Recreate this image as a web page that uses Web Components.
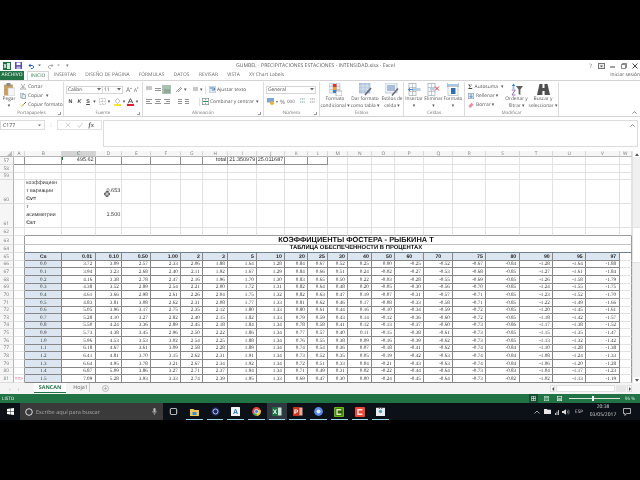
<!DOCTYPE html>
<html lang="es">
<head>
<meta charset="utf-8">
<title>GUMBEL - PRECIPITACIONES ESTACIONES - INTENSIDAD.xlsx - Excel</title>
<style>
  html, body { margin: 0; padding: 0; background: #000; width: 640px; height: 480px; overflow: hidden; }
</style>
</head>
<body>
<xl-app></xl-app>
<script>
const UI_FONT = '"Open Sans", "Liberation Sans", sans-serif';

const tri = '<svg width="4" height="3" viewBox="0 0 4 3"><path d="M0 0h4L2 2.4z" fill="#666"/></svg>';

class XlTitlebar extends HTMLElement {
  constructor() {
    super();
    this.attachShadow({ mode: "open" }).innerHTML = `
    <style>
      :host { display: flex; align-items: center; height: 11px; background: #fff; position: relative; font: 5.1px ${UI_FONT}; color: #555; text-rendering: geometricPrecision; }
      .qa { display: flex; align-items: center; gap: 3px; padding-left: 3px; width: 236px; box-sizing: border-box; }
      .title { width: 156px; text-align: center; white-space: nowrap; }
      .ctl { margin-left: auto; display: flex; align-items: center; }
      .ctl span { width: 11px; text-align: center; font-size: 6px; color: #555; display: flex; justify-content: center; }
    </style>
    <div class="qa">
      <svg width="8" height="8" viewBox="0 0 8 8"><rect width="8" height="8" fill="#1d6f42"/><rect x="4" y="1" width="3" height="6" fill="#cfe8d8"/><path d="M1 2l2 4M3 2L1 6" stroke="#fff" stroke-width=".9"/></svg>
      <svg width="7" height="7" viewBox="0 0 7 7" style="margin-left:1px"><rect width="7" height="7" fill="#5b4fa8"/><rect x="1.5" y=".5" width="4" height="2.6" fill="#fff"/><rect x="1.5" y="4.5" width="4" height="2.5" fill="#bdb6df"/></svg>
      <svg width="7" height="6" viewBox="0 0 7 6" style="margin-left:3px"><path d="M1 2.5h3.5a1.6 1.6 0 0 1 0 3H3" fill="none" stroke="#2a5ca8" stroke-width="1"/><path d="M2.5 .5L.5 2.5l2 2z" fill="#2a5ca8"/></svg>
      ${tri.replace('width="4"','width="3"')}
      <svg width="7" height="6" viewBox="0 0 7 6" style="margin-left:3px"><path d="M6 2.5H2.5a1.6 1.6 0 0 0 0 3H4" fill="none" stroke="#aaa" stroke-width="1"/><path d="M4.5 .5l2 2-2 2z" fill="#aaa"/></svg>
      ${tri.replace('width="4"','width="3"').replace('#666','#aaa')}
      <span style="color:#888;margin-left:3px">▾</span>
    </div>
    <div class="title">GUMBEL - PRECIPITACIONES ESTACIONES - INTENSIDAD.xlsx - Excel</div>
    <div class="ctl">
      <span>?</span>
      <span><svg width="7" height="6" viewBox="0 0 7 6"><rect x=".5" y=".5" width="6" height="5" fill="#eee" stroke="#777"/><path d="M2 2.5h3L3.5 4.5z" fill="#555"/></svg></span>
      <span><svg width="5" height="5" viewBox="0 0 5 5"><path d="M0 4h5" stroke="#444"/></svg></span>
      <span><svg width="6" height="6" viewBox="0 0 6 6"><path d="M.5 1.5h4v4h-4zM1.5 1.5v-1h4v4h-1" fill="none" stroke="#555" stroke-width=".7"/></svg></span>
      <span><svg width="6" height="6" viewBox="0 0 6 6"><path d="M.5.5l5 5M5.5.5l-5 5" stroke="#333" stroke-width=".9"/></svg></span>
    </div>`;
  }
}

class XlTabs extends HTMLElement {
  constructor() {
    super();
    const tabs = [["INSERTAR", 32], ["DISEÑO DE PÁGINA", 53], ["FÓRMULAS", 35], ["DATOS", 25], ["REVISAR", 29], ["VISTA", 21], ["XY Chart Labels", 45]];
    this.attachShadow({ mode: "open" }).innerHTML = `
    <style>
      :host { display: flex; height: 9px; background: #fff; font: 4.9px ${UI_FONT}; color: #666; text-rendering: geometricPrecision; line-height: 9px; }
      div { text-align: center; white-space: nowrap; box-sizing: border-box; flex: none; }
      .file { width: 24px; background: #217346; color: #fff; margin-right: 3px; }
      .on { width: 22px; color: #217346; border: 1px solid #d4d4d4; border-bottom: 0; line-height: 8px; background: #fff; }
      .login { margin-left: auto; padding-right: 0; font-size: 4.9px; color: #555; }
    </style>
    <div class="file">ARCHIVO</div><div class="on">INICIO</div>
    ${tabs.map(([t, w]) => `<div style="width:${w}px">${t}</div>`).join("")}
    <div class="login">Iniciar sesión</div>`;
  }
}

class XlGroup extends HTMLElement {
  constructor() {
    super();
    this.attachShadow({ mode: "open" }).innerHTML = `
    <style>
      :host { display: flex; flex-direction: column; flex: none; box-sizing: border-box; border-right: 1px solid #dcdcdc; height: 34px; margin-top: 1px; position: relative; }
      .body { flex: 1; display: flex; min-height: 0; }
      .label { height: 5px; line-height: 5px; text-align: center; color: #777; font-size: 4.6px; margin-bottom: .5px; }
      .launch { position: absolute; right: 2px; bottom: 1px; width: 2px; height: 2px; border-right: 1px solid #999; border-bottom: 1px solid #999; }
    </style>
    <div class="body"><slot></slot></div>
    <div class="label"></div>
    <div class="launch" part="launch"></div>`;
    this.shadowRoot.querySelector(".label").textContent = this.getAttribute("label");
    if (this.hasAttribute("nolaunch")) this.shadowRoot.querySelector(".launch").remove();
  }
}

class XlBigBtn extends HTMLElement {
  constructor() {
    super();
    this.attachShadow({ mode: "open" }).innerHTML = `
    <style>
      :host { display: flex; flex-direction: column; align-items: center; flex: none; padding-top: 1px; box-sizing: border-box; }
      .ico { height: 13px; display: flex; align-items: center; }
      .txt { margin-top: 0; line-height: 6.6px; text-align: center; white-space: pre; font-size: 4.8px; color: #555; }
    </style>
    <div class="ico"><slot></slot></div>
    <div class="txt"></div>`;
    this.shadowRoot.querySelector(".txt").textContent = this.getAttribute("label");
  }
}

class XlSelect extends HTMLElement {
  constructor() {
    super();
    this.attachShadow({ mode: "open" }).innerHTML = `
    <style>
      :host { display: flex; align-items: center; box-sizing: border-box; height: 8px; border: 1px solid #d6d6d6; background: #fff; padding: 0 1px 0 1px; font: 4.9px ${UI_FONT}; color: #444; flex: none; }
      svg { margin-left: auto; }
    </style>
    <slot></slot>${tri}`;
  }
}

class XlRibbon extends HTMLElement {
  constructor() {
    super();
    const bars = (ys, x1s, x2s) => `<svg width="8" height="7" viewBox="0 0 8 7">${ys.map((y, i) => `<path d="M${x1s[i]} ${y}H${x2s[i]}" stroke="#777" stroke-width=".8"/>`).join("")}</svg>`;
    this.attachShadow({ mode: "open" }).innerHTML = `
    <style>
      :host { display: flex; height: 37px; background: #fff; border-top: 1px solid #d4d4d4; border-bottom: 1px solid #d4d4d4; box-sizing: border-box; font: 4.9px ${UI_FONT}; color: #555; text-rendering: geometricPrecision; position: relative; }
      .col { display: flex; flex-direction: column; }
      .row { display: flex; align-items: center; height: 9.4px; white-space: nowrap; }
      .row svg { flex: none; }
      .tall { height: 16px; }
      b { font: bold 5.4px "Liberation Sans", sans-serif; color: #444; display: block; text-align: center; }
      .btn { display: flex; align-items: center; justify-content: center; flex: none; }
      .caret { position: absolute; right: 3px; bottom: 2px; }
    </style>

    <xl-group label="Portapapeles" style="width:64px">
      <xl-big-btn label="Pegar&#10;▾" style="width:18px">
        <svg width="11" height="13" viewBox="0 0 11 13"><rect y="1.5" width="9" height="11" rx=".6" fill="#c8a063"/><rect x="2.5" width="4" height="3" fill="#8a8a8a"/><rect x="4" y="5" width="7" height="8" fill="#f5f5f5" stroke="#b8b8b8" stroke-width=".5"/></svg>
      </xl-big-btn>
      <div class="col">
        <div class="row"><svg width="6" height="6" viewBox="0 0 6 6" style="margin:0 2px 0 2px"><path d="M1 0l3 4M5 0L2 4" stroke="#888" stroke-width=".7"/><circle cx="1.4" cy="4.8" r="1" fill="none" stroke="#888" stroke-width=".6"/><circle cx="4.6" cy="4.8" r="1" fill="none" stroke="#888" stroke-width=".6"/></svg>Cortar</div>
        <div class="row"><svg width="6" height="6" viewBox="0 0 6 6" style="margin:0 2px 0 2px"><rect x=".3" y=".3" width="3.6" height="4" fill="#fff" stroke="#8aa" stroke-width=".6"/><rect x="2" y="1.7" width="3.6" height="4" fill="#e8f0ee" stroke="#789" stroke-width=".6"/></svg>Copiar<span style="margin-left:3px">▾</span></div>
        <div class="row"><svg width="6" height="6" viewBox="0 0 6 6" style="margin:0 2px 0 2px"><path d="M3.4 2.5L6 0" stroke="#7a6030"/><path d="M.4 5.6L3 2l1 1z" fill="#e0b23a"/></svg>Copiar formato</div>
      </div>
    </xl-group>

    <xl-group label="Fuente" style="width:79px">
      <div class="col" style="padding:3px 0 0 2px">
        <div class="row" style="height:9px">
          <xl-select style="width:37px">Calibri</xl-select><xl-select style="width:21px;margin-left:-1px">11</xl-select>
          <span style="margin-left:3px;font-size:6.5px;color:#666">A<sup style="font-size:3px">▴</sup></span>
          <span style="margin-left:2px;font-size:5.4px;color:#666">A<sup style="font-size:3px">▾</sup></span>
        </div>
        <div class="row" style="margin-top:3px;height:9px">
          <b style="width:7px;margin-left:1px">N</b><b style="width:9px;margin-left:1px;font-style:italic">K</b><b style="width:8px;text-decoration:underline">S</b>
          <span style="width:5px;text-align:center">▾</span>
          <svg width="7" height="7" viewBox="0 0 7 7" style="margin-left:2px"><path d="M.5.5h6v6h-6zM3.5.5v6M.5 3.5h6" fill="none" stroke="#aaa" stroke-width=".6" stroke-dasharray="1 .5"/></svg>
          <span style="width:6px;text-align:center">▾</span>
          <svg width="7" height="8" viewBox="0 0 7 8" style="margin-left:2px"><path d="M3.5.5L6 3.2 3.5 5.5 1 3.2z" fill="#fff" stroke="#888" stroke-width=".6"/><rect y="6" width="7" height="2" fill="#f5e626"/></svg>
          <span style="width:6px;text-align:center">▾</span>
          <svg width="7" height="8" viewBox="0 0 7 8"><path d="M1 5.4L3.5.6 6 5.4M2 3.8h3" fill="none" stroke="#555" stroke-width=".9"/><rect y="6" width="7" height="2" fill="#d9222a"/></svg>
          <span style="width:6px;text-align:center">▾</span>
        </div>
      </div>
    </xl-group>

    <xl-group label="Alineación" style="width:121px">
      <div class="col" style="padding:3px 0 0 1px">
        <div class="row" style="height:9px">
          <span class="btn" style="width:9px">${bars([1,3], [1,1], [7,7])}</span>
          <span class="btn" style="width:9px">${bars([2.5,4.5], [1,1], [7,7])}</span>
          <span class="btn" style="width:9px;height:9px;background:#a8c3b0">${bars([4,6], [1,1], [7,7])}</span>
          <span class="btn" style="width:10px;margin-left:3px"><svg width="8" height="7" viewBox="0 0 8 7"><path d="M1 6l5-5M3 6l4-4" stroke="#777" stroke-width=".8"/></svg></span>
          <span style="width:4px">▾</span>
          <span class="btn" style="width:10px;margin-left:2px">${bars([2,4], [2,2], [7,7])}</span>
          <span style="width:4px">▾</span>
          <span style="width:1px;height:8px;background:#e0e0e0;margin:0 3px 0 1px"></span>
          <svg width="7" height="7" viewBox="0 0 7 7"><rect width="7" height="7" fill="#dfe7f2" stroke="#8aa" stroke-width=".5"/><path d="M1 2h4.5v2H3" fill="none" stroke="#2b6cb8" stroke-width=".8"/></svg>
          <span style="margin-left:1px">Ajustar texto</span>
        </div>
        <div class="row" style="margin-top:3px;height:9px">
          <span class="btn" style="width:9px">${bars([1.5,3.5,5.5], [1,1,1], [7,5,7])}</span>
          <span class="btn" style="width:9px">${bars([1.5,3.5,5.5], [1,2,1], [7,6,7])}</span>
          <span class="btn" style="width:9px">${bars([1.5,3.5,5.5], [1,3,1], [7,7,7])}</span>
          <span class="btn" style="width:9px;margin-left:3px">${bars([1.5,3.5,5.5], [3,3,3], [7,7,7])}</span>
          <span class="btn" style="width:9px">${bars([1.5,3.5,5.5], [1,1,1], [5,5,5])}</span>
          <span style="width:1px;height:8px;background:#e0e0e0;margin:0 2px 0 7px"></span>
          <svg width="7" height="7" viewBox="0 0 7 7"><rect x=".3" y=".3" width="6.4" height="6.4" fill="#fff" stroke="#6c8a78" stroke-width=".7"/><path d="M1 3.5h5" stroke="#2e7d4f" stroke-width=".9"/><path d="M3.5 .3v2M3.5 4.7v2" stroke="#9ab"/></svg>
          <span style="margin-left:1px">Combinar y centrar</span><span style="margin-left:2px">▾</span>
        </div>
      </div>
    </xl-group>

    <xl-group label="Número" style="width:56px">
      <div class="col" style="padding:3px 0 0 2px">
        <div class="row" style="height:9px"><xl-select style="width:50px">General</xl-select></div>
        <div class="row" style="margin-top:3px;height:9px;color:#666">
          <svg width="8" height="7" viewBox="0 0 8 7" style="margin-left:1px"><rect width="7" height="4.5" fill="#7ea6cf"/><circle cx="5" cy="5" r="2" fill="#e2b23a"/></svg>
          <span style="margin-left:1px;font-size:4px">▾</span>
          <span style="margin-left:2px;font-size:6px">%</span>
          <span style="margin-left:2px;font-size:4.6px">000</span>
          <span style="margin-left:4px"><svg width="7" height="7" viewBox="0 0 7 7"><path d="M1 2h5M1 5h5" stroke="#7aa" stroke-width="1.2" stroke-dasharray="1.2 .6"/></svg></span>
          <span style="margin-left:3px"><svg width="7" height="7" viewBox="0 0 7 7"><path d="M1 2h5M1 5h5" stroke="#999" stroke-width="1.2" stroke-dasharray="1.2 .6"/></svg></span>
        </div>
      </div>
    </xl-group>

    <xl-group label="Estilos" nolaunch style="width:84px">
      <xl-big-btn label="Formato&#10;condicional ▾" style="width:30px">
        <svg width="13" height="13" viewBox="0 0 13 13"><rect width="11" height="10" fill="#eef1f5" stroke="#9aa7b8" stroke-width=".5"/><path d="M4 0v10M7.5 0v10M0 3.3h11M0 6.6h11" stroke="#9aa7b8" stroke-width=".5"/><rect x="4" y="1" width="3.5" height="3" fill="#d43a2f"/><rect x="4" y="4" width="3.5" height="3" fill="#e8a33a"/><rect x="4" y="7" width="3.5" height="3" fill="#3f7fc4"/><rect x="7" y="8" width="6" height="5" fill="#fff" stroke="#777" stroke-width=".5"/></svg>
      </xl-big-btn>
      <xl-big-btn label="Dar formato&#10;como tabla ▾" style="width:30px">
        <svg width="13" height="13" viewBox="0 0 13 13"><rect width="11" height="10" fill="#b7c9de" stroke="#8ea4bd" stroke-width=".5"/><path d="M0 3h11M0 6h11M4 0v10M8 0v10" stroke="#e8eef5" stroke-width=".6"/><path d="M6 12l6-7" stroke="#667" stroke-width="1.6"/></svg>
      </xl-big-btn>
      <xl-big-btn label="Estilos de&#10;celda ▾" style="width:24px">
        <svg width="14" height="13" viewBox="0 0 14 13"><rect width="12" height="10" fill="#eef1f5" stroke="#8ea4bd" stroke-width=".5"/><rect x="2" y="2" width="8" height="6" fill="#a9bdd8"/><path d="M7 12.5l6-7" stroke="#667" stroke-width="1.5"/></svg>
      </xl-big-btn>
    </xl-group>

    <xl-group label="Celdas" nolaunch style="width:61px">
      <xl-big-btn label="Insertar&#10;▾" style="width:20px">
        <svg width="13" height="13" viewBox="0 0 13 13"><rect x="1" y=".5" width="7" height="12" fill="#fff" stroke="#8a98a8" stroke-width=".6"/><path d="M1 4.5h7M1 8.5h7M4.5 .5v12" stroke="#8a98a8" stroke-width=".5"/><rect x="5" y="5" width="7.5" height="3" fill="#b9cde3"/><path d="M5 6.5H.5M2 5L.5 6.5 2 8" fill="none" stroke="#2b6cb8" stroke-width=".8"/></svg>
      </xl-big-btn>
      <xl-big-btn label="Eliminar&#10;▾" style="width:19px">
        <svg width="13" height="13" viewBox="0 0 13 13"><rect x="1" y=".5" width="7" height="12" fill="#fff" stroke="#8a98a8" stroke-width=".6"/><path d="M1 4.5h7M1 8.5h7M4.5 .5v12" stroke="#8a98a8" stroke-width=".5"/><rect x="3" y="4.5" width="4" height="3" fill="#b9cde3"/><path d="M8 3.5l4 4M12 3.5l-4 4" stroke="#d8402f" stroke-width="1"/></svg>
      </xl-big-btn>
      <xl-big-btn label="Formato&#10;▾" style="width:20px">
        <svg width="12" height="13" viewBox="0 0 12 13"><path d="M1 2h10M0 0v4M12 0v4" stroke="#2b6cb8" stroke-width=".8"/><rect x="1" y="3.5" width="10" height="9" fill="#fff" stroke="#8a98a8" stroke-width=".5"/><rect x="4" y="5" width="4.5" height="6" fill="#2f6eb5"/></svg>
      </xl-big-btn>
    </xl-group>

    <xl-group label="Modificar" nolaunch style="width:94px">
      <div class="col" style="width:38px;padding:0 0 0 3px;box-sizing:border-box">
        <div class="row"><span style="width:6px;font:bold 7px 'Liberation Serif',serif;color:#444">Σ</span><span style="margin-left:2px">Autosuma</span><span style="margin-left:3px">▾</span></div>
        <div class="row"><svg width="6" height="6" viewBox="0 0 6 6"><rect x=".3" y=".3" width="5.4" height="5.4" fill="#dfe8f2" stroke="#7f95ad" stroke-width=".6"/><path d="M3 1v3.4M1.6 3l1.4 1.6L4.4 3" fill="none" stroke="#2b6cb8" stroke-width=".7"/></svg><span style="margin-left:2px">Rellenar</span><span style="margin-left:1px">▾</span></div>
        <div class="row"><svg width="6" height="6" viewBox="0 0 6 6"><path d="M.5 4L3.5.8 5.6 2.6 3 5.6H1.4z" fill="#e88fa8"/></svg><span style="margin-left:2px">Borrar</span><span style="margin-left:1px">▾</span></div>
      </div>
      <xl-big-btn label="Ordenar y&#10;filtrar ▾" style="width:27px">
        <svg width="12" height="13" viewBox="0 0 12 13"><path d="M2.500 .5L.8 3h3.400z" fill="#3f7fc4"/><rect x="1.6" y="3" width="1.8" height="3" fill="#9fc0e2"/><path d="M.8 7h3.400L1 12h3.400" fill="none" stroke="#8e5fb0" stroke-width=".9"/><path d="M5 3h7L9.400 6.500V12L7.600 11V6.500z" fill="#606060"/></svg>
      </xl-big-btn>
      <xl-big-btn label="Buscar y&#10;seleccionar ▾" style="width:26px">
        <svg width="13" height="12" viewBox="0 0 13 12"><path d="M2.500 0h3v4h2V0h3L13 11H7.600V7H5.400v4H0z" fill="#4f4f4f"/></svg>
      </xl-big-btn>
    </xl-group>
    <svg class="caret" width="5" height="3" viewBox="0 0 5 3"><path d="M.5 2.600L2.500.6l2 2" fill="none" stroke="#555" stroke-width=".7"/></svg>`;
  }
}

class XlFormula extends HTMLElement {
  constructor() {
    super();
    this.attachShadow({ mode: "open" }).innerHTML = `
    <style>
      :host { display: flex; align-items: flex-start; height: 34px; padding: 3px 2px 0 0; box-sizing: border-box; background: #fff; font: 5.2px ${UI_FONT}; color: #444; text-rendering: geometricPrecision; }
      .name { width: 45px; height: 10px; box-sizing: border-box; border: 1px solid #dcdcdc; display: flex; align-items: center; padding: 0 3px 0 2px; justify-content: space-between; }
      .dots { width: 12px; text-align: center; color: #aaa; line-height: 10px; }
      .fx { width: 45px; height: 10px; box-sizing: border-box; border: 1px solid #e2e2e2; display: flex; align-items: center; justify-content: space-around; padding: 0 4px; }
      .input { flex: 1; height: 27px; margin-top: 0; box-sizing: border-box; border: 1px solid #dcdcdc; position: relative; margin-left: 1px; }
      .input svg { position: absolute; right: 2px; top: 3px; }
      i { font: italic bold 6.6px "Liberation Serif", serif; color: #555; }
    </style>
    <div class="name"><span>C177</span>${tri.replace('width="4"','width="3"')}</div>
    <div class="dots">⁝</div>
    <div class="fx">
      <svg width="6" height="6" viewBox="0 0 6 6"><path d="M.7.7l4.6 4.6M5.300.7L.7 5.300" stroke="#bbb" stroke-width=".7"/></svg>
      <svg width="6" height="6" viewBox="0 0 6 6"><path d="M.5 3.400l1.800 2L5.600.8" fill="none" stroke="#bbb" stroke-width=".7"/></svg>
      <i>fx</i>
    </div>
    <div class="input"><svg width="5" height="3" viewBox="0 0 5 3"><path d="M.5 2.600L2.500.6l2 2" fill="none" stroke="#555" stroke-width=".7"/></svg></div>`;
  }
}

const COLS = [13.5, 11.8, 37, 33.4, 26.6, 29, 30, 22, 25, 29, 28, 23, 20, 20, 24, 23, 29, 29, 33, 33.4, 33.6, 33, 33.4, 12];
const NAMES = "ABCDEFGHIJKLMNOPQRSTUVW".split("");
const HEAD = ["0.01", "0.10", "0.50", "1.00", "2", "3", "5", "10", "20", "25", "30", "40", "50", "60", "70", "75", "80", "90", "95", "97"];
const DATA = `0.0 3.72 3.09 2.57 2.33 2.06 1.88 1.64 1.28 0.84 0.67 0.52 0.25 0.00 -0.25 -0.52 -0.67 -0.84 -1.28 -1.64 -1.88
0.1 3.94 3.23 2.68 2.40 2.11 1.92 1.67 1.29 0.84 0.66 0.51 0.24 -0.02 -0.27 -0.53 -0.68 -0.85 -1.27 -1.61 -1.84
0.2 4.16 3.38 2.78 2.47 2.16 1.96 1.70 1.30 0.83 0.65 0.50 0.22 -0.03 -0.28 -0.55 -0.69 -0.85 -1.26 -1.58 -1.79
0.3 4.38 3.52 2.89 2.54 2.21 2.00 1.72 1.31 0.82 0.64 0.48 0.20 -0.05 -0.30 -0.56 -0.70 -0.85 -1.24 -1.55 -1.75
0.4 4.61 3.66 2.98 2.61 2.26 2.04 1.75 1.32 0.82 0.63 0.47 0.19 -0.07 -0.31 -0.57 -0.71 -0.85 -1.23 -1.52 -1.70
0.5 4.83 3.81 3.08 2.62 2.31 2.08 1.77 1.33 0.81 0.62 0.46 0.17 -0.08 -0.33 -0.58 -0.71 -0.85 -1.22 -1.49 -1.66
0.6 5.05 3.96 3.17 2.75 2.35 2.12 1.80 1.33 0.80 0.61 0.44 0.16 -0.10 -0.34 -0.59 -0.72 -0.85 -1.20 -1.45 -1.61
0.7 5.28 4.10 3.27 2.82 2.40 2.15 1.82 1.33 0.79 0.59 0.43 0.14 -0.12 -0.36 -0.60 -0.72 -0.85 -1.18 -1.42 -1.57
0.8 5.50 4.24 3.36 2.89 2.45 2.18 1.84 1.34 0.78 0.58 0.41 0.12 -0.13 -0.37 -0.60 -0.73 -0.86 -1.17 -1.38 -1.52
0.9 5.73 4.38 3.45 2.96 2.50 2.22 1.86 1.34 0.77 0.57 0.40 0.11 -0.15 -0.38 -0.61 -0.73 -0.85 -1.15 -1.35 -1.47
1.0 5.96 4.53 3.53 3.02 2.54 2.25 1.88 1.34 0.76 0.55 0.38 0.09 -0.16 -0.39 -0.62 -0.73 -0.85 -1.13 -1.32 -1.42
1.1 6.18 4.67 3.61 3.09 2.58 2.28 1.89 1.34 0.74 0.54 0.36 0.07 -0.18 -0.41 -0.62 -0.74 -0.84 -1.10 -1.28 -1.38
1.2 6.41 4.81 3.70 3.15 2.62 2.31 1.91 1.34 0.73 0.52 0.35 0.05 -0.19 -0.42 -0.63 -0.74 -0.84 -1.08 -1.24 -1.33
1.3 6.64 4.95 3.78 3.21 2.67 2.34 1.92 1.34 0.72 0.51 0.33 0.04 -0.21 -0.43 -0.63 -0.74 -0.84 -1.06 -1.20 -1.28
1.4 6.87 5.09 3.86 3.27 2.71 2.37 1.94 1.34 0.71 0.49 0.31 0.02 -0.22 -0.44 -0.64 -0.73 -0.83 -1.04 -1.17 -1.23
1.5 7.09 5.28 3.93 3.33 2.74 2.39 1.95 1.33 0.69 0.47 0.30 0.00 -0.24 -0.45 -0.64 -0.73 -0.82 -1.02 -1.13 -1.19`.split("\n").map(l => l.split(" "));

class XlSheet extends HTMLElement {
  constructor() {
    super();
    const rows = [6, 8, 7.7, 7.5, 24, 23.7, 7.7, 9, 8.5];
    for (let i = 0; i < 17; i++) rows.push(7.65);
    const cell = (cls, txt, extra) => `<div class="c ${cls || ""}"${extra ? ` style="${extra}"` : ""}>${txt === undefined ? "" : txt}</div>`;
    let h = "";

    // column headers
    h += cell("hd corner", `<svg width="5" height="5" viewBox="0 0 5 5"><path d="M5 0v5H0z" fill="#bbb"/></svg>`);
    NAMES.forEach(n => { h += cell("hd" + (n === "C" ? " sel" : ""), n); });

    const blank = (num, fn, cls) => {
      h += cell("rh" + (cls ? " " + cls : ""), num);
      NAMES.forEach((n, i) => { h += fn ? fn(n, i) : cell(); });
    };

    // row 57
    blank("57", (n, i) => {
      if (n === "A") return cell("bb");
      if (i > 11) return cell();
      if (n === "C") return cell("bb r", `<span class="mark"></span>495.62`);
      if (n === "H") return cell("bb r", "total");
      if (n === "I") return cell("bb r", "21.350979");
      if (n === "J") return cell("bb r", "25.011687");
      return cell("bb");
    });
    blank("58");
    blank("59");
    blank("60", n => {
      if (n === "B") return cell("wrap", `<span>коэффициен\nт вариации\n<b>Cv=</b></span>`);
      if (n === "D") return cell("r mid", `<svg class="cur" width="6" height="6" viewBox="0 0 7 7"><path d="M2.500.5h2v2h2v2h-2v2h-2v-2h-2v-2h2z" fill="#ddd" stroke="#444" stroke-width="1"/></svg>0.653`);
      return cell();
    });
    blank("61", n => {
      if (n === "B") return cell("wrap", `<span>т\nасимметрии\n<b>Csт</b></span>`);
      if (n === "D") return cell("r mid", "1.500");
      return cell();
    });
    blank("62", n => cell(n === "A" ? "" : "ln"));

    // merged heading
    h += cell("rh", "63") + cell("bx") + cell("title t1", "КОЭФФИЦИЕНТЫ ФОСТЕРА - РЫБКИНА Т", "grid-column:3/-1");
    h += cell("rh", "64") + cell("bx") + cell("title t2", "ТАБЛИЦА ОБЕСПЕЧЕННОСТИ В ПРОЦЕНТАХ", "grid-column:3/-1");

    // table head
    h += cell("rh", "65") + cell("bx") + cell("t blue th ctr", "Cs");
    HEAD.forEach((t, i) => { h += cell("t blue th" + (i === 13 || i === 14 ? " ctr" : " r"), t); });
    h += cell("ln2");

    // table body
    DATA.forEach((row, i) => {
      const n = 66 + i;
      h += cell("rh", n);
      h += cell("bx" + (n === 81 ? " arrow" : ""), n === 81 ? "==&gt;" : "");
      h += cell("t blue ctr", row[0]);
      row.slice(1).forEach(v => { h += cell("t r", v); });
      h += cell("ln2");
    });

    this.attachShadow({ mode: "open" }).innerHTML = `
    <style>
      :host { display: flex; height: 232px; background: #fff; overflow: hidden; text-rendering: geometricPrecision; color: #333; }
      .grid { width: 632px; flex: none; display: grid; grid-template-columns: ${COLS.map(c => c + "px").join(" ")}; grid-template-rows: ${rows.map(r => r + "px").join(" ")}; font: 5.5px "Liberation Sans", sans-serif; }
      .c { box-sizing: border-box; border-right: 1px solid #e2e2e2; border-bottom: 1px solid #e2e2e2; display: flex; align-items: flex-end; white-space: nowrap; overflow: hidden; min-width: 0; position: relative; line-height: 7px; }
      .hd { background: #f6f6f6; border-right-color: #d8d8d8; border-bottom-color: #b5b5b5; justify-content: center; align-items: center; color: #777; font: 4.8px ${UI_FONT}; }
      .corner { justify-content: flex-end; align-items: flex-end; padding: 0 1px 0 0; }
      .sel { background: #d4d4d4; color: #3c6a4e; }
      .rh { background: #f6f6f6; border-right-color: #b5b5b5; border-bottom-color: #dcdcdc; color: #777; justify-content: center; font: 4.8px ${UI_FONT}; }
      .r { justify-content: flex-end; padding-right: 1px; }
      .ctr { justify-content: center; }
      .mid { align-items: center; }
      .bb { border-color: #8f8f8f; }
      .ln { border-bottom-color: #9a9a9a; }
      .bx { border-right-color: #9a9a9a; border-bottom-color: #e2e2e2; }
      .arrow { color: #e070a0; font-size: 4.6px; font-weight: bold; justify-content: center; }
      .wrap { white-space: pre; line-height: 8px; padding-left: 1px; font-size: 5.2px; overflow: visible; align-items: flex-end; }
      .title { border-right-color: #9a9a9a; border-bottom-color: #c4c4c4; justify-content: center; padding-left: 56px; font: bold 7.4px "Liberation Sans", sans-serif; color: #111; align-items: center; background: #fff; }
      .t2 { font-size: 5.9px; border-bottom-color: #6f7f90; }
      .t { border-color: #868686; font: 5.1px "Liberation Serif", serif; color: #333; }
      .t.r { padding-right: 2.5px; }
      .blue { background: #dce6f1; }
      .th { font: bold 5.2px "Liberation Sans", sans-serif; color: #222; }
      .ln2 { border-right-color: #9a9a9a; }
      .mark { position: absolute; left: 0; top: 0; width: 1px; height: 3px; background: #217346; }
      .cur { position: absolute; left: 8px; top: 11px; }
      .bar { flex: 1; display: flex; flex-direction: column; background: #f0f0f0; border-left: 1px solid #e2e2e2; }
      .arr { height: 6px; background: #fff; display: flex; align-items: center; justify-content: center; flex: none; }
      .thumb { height: 36px; margin-top: 70px; background: #fff; border: 1px solid #e2e2e2; border-width: 1px 0; box-sizing: border-box; flex: none; }
    </style>
    <div class="grid">${h}</div>
    <div class="bar">
      <div class="arr"><svg width="4" height="3" viewBox="0 0 4 3"><path d="M2 .3L4 3H0z" fill="#555"/></svg></div>
      <div class="thumb"></div>
      <div class="arr" style="margin-top:auto"><svg width="4" height="3" viewBox="0 0 4 3"><path d="M0 0h4L2 2.700z" fill="#555"/></svg></div>
    </div>`;
  }
}

class XlSheetTabs extends HTMLElement {
  constructor() {
    super();
    this.attachShadow({ mode: "open" }).innerHTML = `
    <style>
      :host { display: flex; align-items: stretch; height: 11px; background: #f4f4f4; font: 5.4px ${UI_FONT}; color: #666; text-rendering: geometricPrecision; }
      .nav { width: 34px; display: flex; align-items: center; padding-left: 9px; gap: 7px; box-sizing: border-box; color: #aaa; }
      .tab { width: 32px; background: #fff; color: #217346; font-weight: 700; text-align: center; line-height: 9px; border-bottom: 1.5px solid #217346; box-sizing: content-box; height: 9px; }
      .other { width: 21px; text-align: center; line-height: 9px; border-right: 1px solid #ccc; height: 9px; margin-left: 0; padding-left: 3px; box-sizing: border-box; }
      .add { margin-left: 12px; display: flex; align-items: center; }
      .h { margin-left: auto; display: flex; align-items: center; gap: 1px; padding-right: 8px; }
      .track { width: 59px; height: 7px; background: #fff; border: 1px solid #e0e0e0; box-sizing: border-box; }
      .rest { width: 10px; height: 7px; background: #e6e6e6; }
      .sb { width: 5px; height: 7px; box-sizing: border-box; border: 1px solid #ddd; background: #fff; display: flex; align-items: center; justify-content: center; }
    </style>
    <div class="nav"><span>‹</span><span>›</span></div>
    <div class="tab">SANCAN</div>
    <div class="other" style="margin-left:3px">Hoja1</div>
    <div class="add"><svg width="7" height="7" viewBox="0 0 7 7"><circle cx="3.500" cy="3.500" r="3" fill="none" stroke="#999" stroke-width=".6"/><path d="M3.500 1.800v3.400M1.800 3.500h3.400" stroke="#999" stroke-width=".6"/></svg></div>
    <div class="h">
      <div class="sb"><svg width="2" height="4" viewBox="0 0 2 4"><path d="M2 0v4L0 2z" fill="#555"/></svg></div>
      <div class="track"></div><div class="rest"></div>
      <div class="sb"><svg width="2" height="4" viewBox="0 0 2 4"><path d="M0 0v4l2-2z" fill="#555"/></svg></div>
    </div>`;
  }
}

class XlStatus extends HTMLElement {
  constructor() {
    super();
    this.attachShadow({ mode: "open" }).innerHTML = `
    <style>
      :host { display: flex; align-items: center; height: 9px; background: #217346; color: #fff; font: 4.6px ${UI_FONT}; text-rendering: geometricPrecision; padding-left: 2px; }
      .v { margin-left: auto; display: flex; align-items: center; height: 9px; }
      .v > span { width: 13px; height: 9px; display: flex; align-items: center; justify-content: center; }
      .on { background: #164f30; width: 9px !important; margin-right: 2px; }
      .slider { width: 51px; height: 1px; background: #d7e7dc; margin-left: 3px; position: relative; }
      .slider i { position: absolute; left: 23px; top: -2px; width: 1.5px; height: 5px; background: #fff; }
      .pct { width: 20px; text-align: right; padding-right: 5px; color: #cfe4d6; box-sizing: border-box; }
    </style>
    <span>LISTO</span>
    <div class="v">
      <span class="on"><svg width="5" height="5" viewBox="0 0 5 5"><path d="M.3.3h4.400v4.400H.3zM2.500.3v4.400M.3 2.500h4.400" fill="none" stroke="#fff" stroke-width=".6"/></svg></span>
      <span><svg width="5" height="5" viewBox="0 0 5 5"><rect x=".3" y=".3" width="4.4" height="4.4" fill="none" stroke="#cfe4d6" stroke-width=".6"/><path d="M1 1.500h3M1 3h3" stroke="#cfe4d6" stroke-width=".6"/></svg></span>
      <span><svg width="5" height="5" viewBox="0 0 5 5"><rect x=".3" y=".3" width="4.4" height="4.4" fill="none" stroke="#fff" stroke-width=".6"/><path d="M1 3h3" stroke="#fff"/></svg></span>
      <div class="slider"><i></i></div>
      <div class="pct">96 %</div>
    </div>`;
  }
}

class XlTaskbar extends HTMLElement {
  constructor() {
    super();
    const tile = (bg, fg, t, extra) => `<svg width="9" height="9" viewBox="0 0 9 9"><rect width="9" height="9" rx=".5" fill="${bg}"/><text x="4.5" y="7" text-anchor="middle" font-family="Liberation Sans" font-weight="700" font-size="7" fill="${fg}">${t}</text>${extra || ""}</svg>`;
    const apps = [
      `<svg width="9" height="8" viewBox="0 0 9 8"><path d="M0 1h3.500l1 1H9v6H0z" fill="#f2c85a"/><rect x="2.5" y="4" width="4" height="3" fill="#3d8fd0"/></svg>`,
      `<svg width="9" height="9" viewBox="0 0 9 9"><circle cx="4.5" cy="4.5" r="4.3" fill="#1b2a5e"/><circle cx="4.5" cy="4.5" r="2.5" fill="none" stroke="#b8c6ee" stroke-width="1"/></svg>`,
      tile("#f1f4f8", "#1d6fb8", "A"),
      `<svg width="9" height="9" viewBox="0 0 9 9"><circle cx="4.5" cy="4.5" r="4.4" fill="#e04a3a"/><path d="M4.500 4.500L.8 6.800A4.400 4.400 0 0 0 4.800 8.900z" fill="#3aa757"/><path d="M4.500 4.500l.3 4.400A4.400 4.400 0 0 0 8.600 3H4.500z" fill="#f5c518"/><circle cx="4.5" cy="4.5" r="2" fill="#4285f4" stroke="#fff" stroke-width=".7"/></svg>`,
      `<svg width="10" height="9" viewBox="0 0 10 9"><rect x="3.5" y=".5" width="6" height="8" fill="#cfe3d6"/><rect width="6" height="9" rx=".4" fill="#1d6f42"/><text x="3" y="7" text-anchor="middle" font-family="Liberation Sans" font-weight="700" font-size="6.4" fill="#fff">X</text></svg>`,
      `<svg width="10" height="9" viewBox="0 0 10 9"><rect x="3.5" y=".5" width="6" height="8" fill="#e9b09f"/><rect width="6.4" height="9" rx=".4" fill="#c8351f"/><text x="3.2" y="7" text-anchor="middle" font-family="Liberation Sans" font-weight="700" font-size="6.4" fill="#fff">P</text></svg>`,
      `<svg width="9" height="9" viewBox="0 0 9 9"><circle cx="4.5" cy="4.5" r="4.4" fill="#5a8ae6"/><circle cx="4.5" cy="4.5" r="2" fill="#dfe9fb"/></svg>`,
      `<svg width="10" height="10" viewBox="0 0 10 10"><rect width="10" height="10" rx="1" fill="#6fb31f"/><rect x="1.4" y="1.4" width="7.2" height="7.2" fill="#2c5a0e"/><path d="M7.400 2.800H3v4.400h4.400" fill="none" stroke="#d8f1b0" stroke-width="1.4"/></svg>`,
      `<svg width="10" height="10" viewBox="0 0 10 10"><rect width="10" height="10" rx="1" fill="#e8493b"/><path d="M7.400 2.800H3v4.400h4.400" fill="none" stroke="#ffe6e0" stroke-width="1.4"/></svg>`,
      `<svg width="9" height="9" viewBox="0 0 9 9"><rect y=".8" width="9" height="8.2" fill="#e8edf2"/><rect x="2.8" width="1" height="2" fill="#555"/><rect x="5.2" width="1" height="2" fill="#555"/><circle cx="4.5" cy="4.5" r="1.7" fill="#5b9fb3"/></svg>`
    ];
    this.attachShadow({ mode: "open" }).innerHTML = `
    <style>
      :host { display: flex; align-items: stretch; height: 17px; background: #0b1117; color: #ddd; font: 5.4px ${UI_FONT}; text-rendering: geometricPrecision; }
      .start { width: 20px; display: flex; align-items: center; justify-content: center; }
      .search { width: 143px; background: #3a3a3a; color: #a9a9a9; display: flex; align-items: center; padding: 0 6px 0 5px; box-sizing: border-box; gap: 3px; font-size: 5.6px; }
      .search svg:last-child { margin-left: auto; }
      .tv { width: 21px; display: flex; align-items: center; justify-content: center; }
      .app { width: 20.7px; display: flex; align-items: center; justify-content: center; position: relative; box-sizing: border-box; }
      .app::after { content: ""; position: absolute; left: 2px; right: 2px; bottom: 0; height: 1px; background: #9adbe8; }
      .act { background: #2f3840; }
      .tray { margin-left: auto; display: flex; align-items: center; padding-right: 6px; }
      .tray > span { display: flex; justify-content: center; align-items: center; }
      .clock { text-align: center; line-height: 7.4px; font-size: 5px; width: 28px; margin: 0 3px 0 2px; }
    </style>
    <div class="start"><svg width="7" height="7" viewBox="0 0 7 7"><path d="M0 1l3-.4v2.700H0zM3.400.5L7 0v3.300H3.400zM0 3.700h3v2.700L0 6zM3.400 3.700H7V7l-3.600-.5z" fill="#fff"/></svg></div>
    <div class="search">
      <svg width="8" height="8" viewBox="0 0 8 8"><circle cx="4" cy="4" r="3.3" fill="none" stroke="#eee" stroke-width=".9"/></svg>
      <span>Escribe aquí para buscar</span>
      <svg width="5" height="7" viewBox="0 0 5 7"><rect x="1.4" width="2.2" height="4.4" rx="1.1" fill="#bbb"/><path d="M.5 3.200a2 2 0 0 0 4 0M2.500 5.400V7" fill="none" stroke="#bbb" stroke-width=".6"/></svg>
    </div>
    <div class="tv"><svg width="9" height="7" viewBox="0 0 9 7"><rect x="1.5" y=".5" width="6" height="6" rx=".5" fill="none" stroke="#ddd" stroke-width=".8"/><path d="M0 1.500v4M9 1.500v4" stroke="#888" stroke-width=".7"/></svg></div>
    ${apps.map((a, i) => `<div class="app${i === 4 ? " act" : ""}">${a}</div>`).join("")}
    <div class="tray">
      <span style="width:11px"><svg width="6" height="4" viewBox="0 0 6 4"><path d="M.5 3.500L3 1l2.500 2.500" fill="none" stroke="#ddd" stroke-width=".7"/></svg></span>
      <span style="width:10px"><svg width="7" height="5" viewBox="0 0 7 5"><path d="M0 0h3l.7.8H7V5H0z" fill="#e8e8e8"/></svg></span>
      <span style="width:9px"><svg width="6" height="6" viewBox="0 0 6 6"><path d="M4.500 6V1M3 6V2.500M1.500 6V4" stroke="#bbb" stroke-width="1"/></svg></span>
      <span style="width:10px"><svg width="8" height="6" viewBox="0 0 8 6"><path d="M0 2h1.500L4 .3v5.400L1.500 4H0z" fill="#ddd"/><path d="M5 1.500a2 2 0 0 1 0 3M6 .5a3.400 3.400 0 0 1 0 5" fill="none" stroke="#ddd" stroke-width=".5"/></svg></span>
      <span style="width:16px;font-size:4.6px">ESP</span>
      <div class="clock">20:38<br>03/05/2017</div>
      <span style="width:14px"><svg width="8" height="8" viewBox="0 0 8 8"><path d="M.5.5h7v5H3.500L2 7.500V5.500H.5z" fill="none" stroke="#eee" stroke-width=".7"/></svg></span>
    </div>`;
  }
}

class XlApp extends HTMLElement {
  constructor() {
    super();
    this.attachShadow({ mode: "open" }).innerHTML = `
    <style>
      :host { display: flex; flex-direction: column; width: 640px; height: 480px; box-sizing: border-box; padding: 60px 0; background: #000; overflow: hidden; filter: blur(.35px); }
    </style>
    <xl-titlebar></xl-titlebar>
    <xl-tabs></xl-tabs>
    <xl-ribbon></xl-ribbon>
    <xl-formula></xl-formula>
    <xl-sheet></xl-sheet>
    <xl-sheet-tabs></xl-sheet-tabs>
    <xl-status></xl-status>
    <xl-taskbar></xl-taskbar>`;
  }
}

customElements.define("xl-titlebar", XlTitlebar);
customElements.define("xl-tabs", XlTabs);
customElements.define("xl-group", XlGroup);
customElements.define("xl-big-btn", XlBigBtn);
customElements.define("xl-select", XlSelect);
customElements.define("xl-ribbon", XlRibbon);
customElements.define("xl-formula", XlFormula);
customElements.define("xl-sheet", XlSheet);
customElements.define("xl-sheet-tabs", XlSheetTabs);
customElements.define("xl-status", XlStatus);
customElements.define("xl-taskbar", XlTaskbar);
customElements.define("xl-app", XlApp);
</script>
</body>
</html>
